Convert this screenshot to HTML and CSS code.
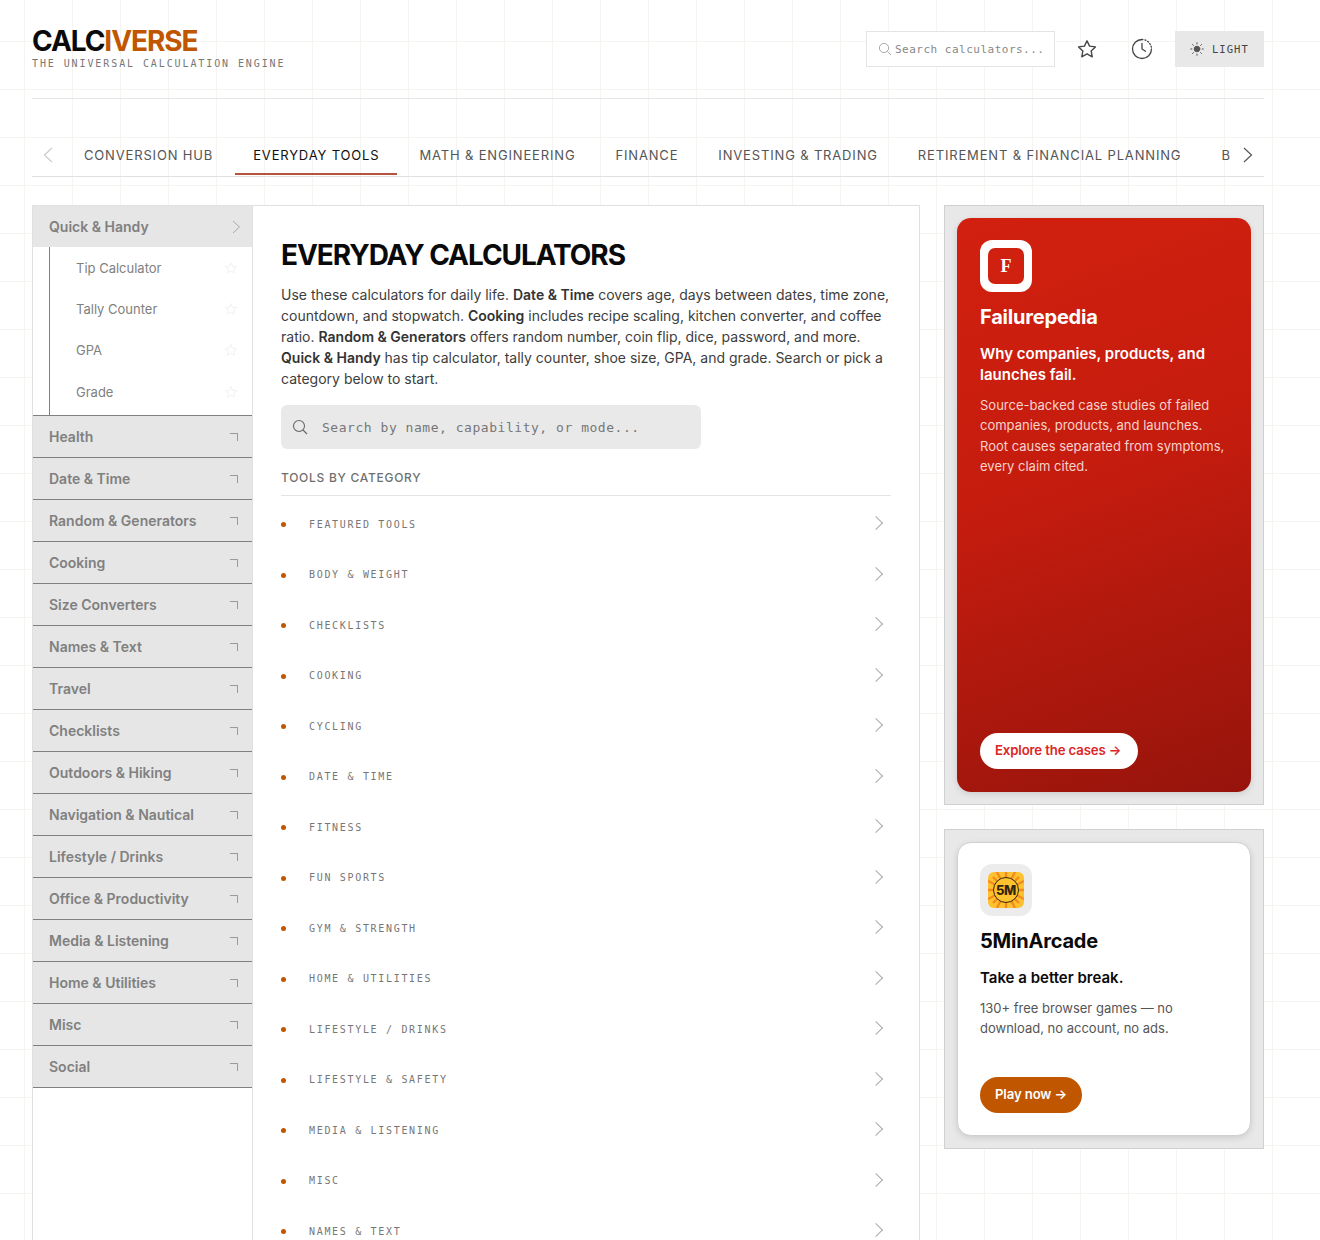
FILE: index.html
```html
<!DOCTYPE html>
<html lang="en">
<head>
    <meta charset="UTF-8">
    <meta name="viewport" content="width=device-width, initial-scale=1.0">
    <title>Calciverse</title>
    <link rel="stylesheet" href="styles.css">
</head>
<body>
    <header class="topbar">
        <div class="brand">
            <div class="logo">CALC<span>IVERSE</span></div>
            <div class="tagline">THE UNIVERSAL CALCULATION ENGINE</div>
        </div>
        <div class="tools">
            <div class="top-search">
                <svg width="14" height="14" viewBox="0 0 14 14" fill="none" stroke="#aaa" stroke-width="1"><circle cx="6" cy="6" r="4.6"/><path d="M9.4 9.4L13 13"/></svg>
                <span>Search calculators...</span>
            </div>
            <button class="icon-btn star-btn">
                <svg width="22" height="22" viewBox="0 0 24 24" fill="none" stroke="#444" stroke-width="1.5" stroke-linejoin="round"><path d="M12 3l2.8 5.9 6.4.8-4.7 4.4 1.2 6.4-5.7-3.1-5.700 3.100 1.200-6.400-4.700-4.400 6.400-.8z"/></svg>
            </button>
            <button class="icon-btn clock-btn">
                <svg width="22" height="22" viewBox="0 0 22 22" fill="none" stroke="#444" stroke-width="1.3" stroke-linecap="round"><path d="M11 1.500a9.500 9.500 0 1 0 9.500 9.500"/><path d="M11 1.500a9.500 9.500 0 0 1 9.500 9.500" stroke-dasharray="1 2"/><path d="M11 5.500V11l3.500 2.200"/></svg>
            </button>
            <button class="theme-btn">
                <svg width="14" height="14" viewBox="0 0 14 14" fill="#555" stroke="#555" stroke-width="1" stroke-linecap="round"><circle cx="7" cy="7" r="2.800"/><path d="M7 .7v1.200M7 12.100v1.200M.7 7h1.200M12.100 7h1.200M2.500 2.500l.9.9M10.600 10.600l.9.9M2.500 11.500l.9-.9M10.600 3.400l.9-.9"/></svg>
                LIGHT
            </button>
        </div>
    </header>

    <nav class="tabs">
        <span class="tab-arrow left"><svg width="12" height="18" viewBox="0 0 12 18" fill="none" stroke="#ccc" stroke-width="1.2"><path d="M10 2L2.500 9l7.500 7"/></svg></span>
        <div class="tab-list">
            <a class="tab">CONVERSION HUB</a>
            <a class="tab active">EVERYDAY TOOLS</a>
            <a class="tab">MATH &amp; ENGINEERING</a>
            <a class="tab">FINANCE</a>
            <a class="tab">INVESTING &amp; TRADING</a>
            <a class="tab">RETIREMENT &amp; FINANCIAL PLANNING</a>
            <a class="tab">B</a>
        </div>
        <span class="tab-arrow right"><svg width="12" height="18" viewBox="0 0 12 18" fill="none" stroke="#555" stroke-width="1.2"><path d="M2 2l7.500 7L2 16"/></svg></span>
    </nav>

    <div class="layout">
        <div class="panel">
            <aside class="sidebar">
                <div class="cat open">Quick &amp; Handy
                    <svg width="9" height="14" viewBox="0 0 9 14" fill="none" stroke="#aaa" stroke-width="1"><path d="M1 1l6.500 6L1 13"/></svg>
                </div>
                <div class="sub-list">
                    <div class="sub-item">Tip Calculator <svg class="fav" width="14" height="14" viewBox="0 0 24 24"><path d="M12 3l2.800 5.900 6.400.8-4.700 4.400 1.200 6.400-5.700-3.100-5.700 3.100 1.200-6.400-4.700-4.400 6.400-.8z"/></svg></div>
                    <div class="sub-item">Tally Counter <svg class="fav" width="14" height="14" viewBox="0 0 24 24"><path d="M12 3l2.800 5.900 6.400.8-4.700 4.400 1.200 6.400-5.700-3.100-5.700 3.100 1.200-6.400-4.700-4.400 6.400-.8z"/></svg></div>
                    <div class="sub-item">GPA <svg class="fav" width="14" height="14" viewBox="0 0 24 24"><path d="M12 3l2.800 5.900 6.400.8-4.700 4.400 1.200 6.400-5.700-3.100-5.700 3.100 1.200-6.400-4.700-4.400 6.400-.8z"/></svg></div>
                    <div class="sub-item">Grade <svg class="fav" width="14" height="14" viewBox="0 0 24 24"><path d="M12 3l2.800 5.900 6.400.8-4.700 4.400 1.200 6.400-5.700-3.100-5.700 3.100 1.200-6.400-4.700-4.400 6.400-.8z"/></svg></div>
                </div>
                <div class="cat first">Health <i class="corner"></i></div>
                <div class="cat">Date &amp; Time <i class="corner"></i></div>
                <div class="cat">Random &amp; Generators <i class="corner"></i></div>
                <div class="cat">Cooking <i class="corner"></i></div>
                <div class="cat">Size Converters <i class="corner"></i></div>
                <div class="cat">Names &amp; Text <i class="corner"></i></div>
                <div class="cat">Travel <i class="corner"></i></div>
                <div class="cat">Checklists <i class="corner"></i></div>
                <div class="cat">Outdoors &amp; Hiking <i class="corner"></i></div>
                <div class="cat">Navigation &amp; Nautical <i class="corner"></i></div>
                <div class="cat">Lifestyle / Drinks <i class="corner"></i></div>
                <div class="cat">Office &amp; Productivity <i class="corner"></i></div>
                <div class="cat">Media &amp; Listening <i class="corner"></i></div>
                <div class="cat">Home &amp; Utilities <i class="corner"></i></div>
                <div class="cat">Misc <i class="corner"></i></div>
                <div class="cat">Social <i class="corner"></i></div>
            </aside>

            <main class="content">
                <h1>EVERYDAY CALCULATORS</h1>
                <p class="intro">Use these calculators for daily life. <b>Date &amp; Time</b> covers age, days between dates, time zone, countdown, and stopwatch. <b>Cooking</b> includes recipe scaling, kitchen converter, and coffee ratio. <b>Random &amp; Generators</b> offers random number, coin flip, dice, password, and more. <b>Quick &amp; Handy</b> has tip calculator, tally counter, shoe size, GPA, and grade. Search or pick a category below to start.</p>
                <div class="big-search">
                    <svg width="16" height="16" viewBox="0 0 16 16" fill="none" stroke="#666" stroke-width="1.100"><circle cx="7" cy="7" r="5.500"/><path d="M11 11l4 4"/></svg>
                    <span>Search by name, capability, or mode...</span>
                </div>
                <h2>TOOLS BY CATEGORY</h2>
                <ul class="groups">
                    <li>FEATURED TOOLS</li>
                    <li>BODY &amp; WEIGHT</li>
                    <li>CHECKLISTS</li>
                    <li>COOKING</li>
                    <li>CYCLING</li>
                    <li>DATE &amp; TIME</li>
                    <li>FITNESS</li>
                    <li>FUN SPORTS</li>
                    <li>GYM &amp; STRENGTH</li>
                    <li>HOME &amp; UTILITIES</li>
                    <li>LIFESTYLE / DRINKS</li>
                    <li>LIFESTYLE &amp; SAFETY</li>
                    <li>MEDIA &amp; LISTENING</li>
                    <li>MISC</li>
                    <li>NAMES &amp; TEXT</li>
                </ul>
            </main>
        </div>

        <aside class="promos">
            <div class="promo-wrap">
                <div class="promo red">
                    <div class="app-icon white"><span class="f-mark">F</span></div>
                    <h3>Failurepedia</h3>
                    <h4>Why companies, products, and launches fail.</h4>
                    <p>Source-backed case studies of failed companies, products, and launches. Root causes separated from symptoms, every claim cited.</p>
                    <a class="pill pill-white">Explore the cases →</a>
                </div>
            </div>
            <div class="promo-wrap second">
                <div class="promo plain">
                    <div class="app-icon grey">
                        <svg class="arcade" width="36" height="36" viewBox="0 0 36 36">
                            <rect width="36" height="36" fill="#fdc22e"/>
                            <g stroke="#f58a1f" stroke-width="2.400">
                                <path d="M18 0v36M0 18h36M5 5l26 26M31 5L5 31M9 0l18 36M27 0L9 36M0 9l36 18M36 9L0 27"/>
                            </g>
                            <circle cx="18" cy="18" r="12.500" fill="#fdc22e" stroke="#33260c" stroke-width="1"/>
                            <text x="18" y="22.700" text-anchor="middle" class="five-m">5M</text>
                        </svg>
                    </div>
                    <h3>5MinArcade</h3>
                    <h4>Take a better break.</h4>
                    <p>130+ free browser games — no download, no account, no ads.</p>
                    <a class="pill pill-orange">Play now →</a>
                </div>
            </div>
        </aside>
    </div>
</body>
</html>
```
FILE: styles.css
```css
* {
    box-sizing: border-box;
}
html, body {
    margin: 0;
    height: 1240px;
    overflow: hidden;
}
body {
    padding: 0 56px 0 32px;
    font-family: Inter, "Liberation Sans", sans-serif;
    color: #111;
    background-color: #fff;
    background-image:
        linear-gradient(to right, #f5f4f1 1px, transparent 1px),
        linear-gradient(to bottom, #f5f4f1 1px, transparent 1px);
    background-size: 48px 48px;
    background-position: 24px 41px;
}

/* header */
.topbar {
    height: 99px;
    display: flex;
    justify-content: space-between;
    align-items: flex-start;
    border-bottom: 1px solid #e6e6e6;
}
.logo {
    margin-top: 25px;
    font-size: 28px;
    line-height: 32px;
    font-weight: 700;
    letter-spacing: -0.038em;
    color: #0a0a0a;
}
.logo span {
    color: #c05600;
}
.tagline {
    font-family: "DejaVu Sans Mono", "Liberation Mono", monospace;
    font-size: 10px;
    line-height: 14px;
    letter-spacing: 0.19em;
    color: #777;
}
.tools {
    margin-top: 31px;
    display: flex;
    align-items: center;
}
.top-search {
    width: 189px;
    height: 36px;
    padding-left: 11px;
    display: flex;
    align-items: center;
    gap: 3px;
    border: 1px solid #e4e4e4;
    background: #fff;
    font-family: "DejaVu Sans Mono", "Liberation Mono", monospace;
    font-size: 11px;
    letter-spacing: 0.045em;
    color: #888;
}
.icon-btn {
    width: 56px;
    height: 36px;
    padding: 0;
    display: flex;
    align-items: center;
    justify-content: center;
    border: none;
    background: none;
}
.star-btn {
    margin-left: 4px;
}
.clock-btn {
    margin-left: -1px;
}
.theme-btn {
    width: 89px;
    height: 36px;
    margin-left: 5px;
    padding: 0 0 0 15px;
    display: flex;
    align-items: center;
    gap: 8px;
    border: none;
    background: #e8e8e8;
    font-family: "DejaVu Sans Mono", "Liberation Mono", monospace;
    font-size: 10.500px;
    letter-spacing: 0.1em;
    color: #444;
}

/* tabs */
.tabs {
    position: relative;
    margin-top: 39px;
    height: 39px;
    padding-left: 34px;
    display: flex;
    overflow: hidden;
    border-bottom: 1px solid #e0e0e0;
}
.tab-list {
    display: flex;
    gap: 4px;
    overflow: hidden;
    width: 1170px;
}
.tab {
    flex: none;
    height: 37px;
    padding: 0 18px;
    font-size: 13px;
    line-height: 34px;
    font-weight: 400;
    letter-spacing: 0.0645em;
    color: #555;
}
.tab.active {
    color: #111;
    border-bottom: 2px solid #b5533c;
}
.tab-arrow {
    position: absolute;
    top: 8px;
    height: 18px;
    background: #fff;
}
.tab-arrow.left {
    left: 10px;
}
.tab-arrow.right {
    left: 1210px;
}

/* page body */
.layout {
    margin-top: 28px;
    display: flex;
    gap: 24px;
    align-items: flex-start;
}
.panel {
    width: 888px;
    min-height: 1100px;
    display: flex;
    border: 1px solid #e0e0e0;
    background: #fff;
}
.sidebar {
    width: 220px;
    flex: none;
    border-right: 1px solid #e0e0e0;
}
.cat {
    height: 42px;
    padding: 0 14px 0 16px;
    display: flex;
    justify-content: space-between;
    align-items: center;
    background: #e6e6e6;
    border-bottom: 1px solid #808080;
    font-size: 14px;
    font-weight: 600;
    color: #808080;
}
.cat.open {
    height: 41px;
    padding-right: 11px;
    border-bottom: none;
}
.cat.first {
    border-top: 1px solid #808080;
    height: 43px;
}
.corner {
    width: 8px;
    height: 8px;
    border-top: 1px solid #9a9a9a;
    border-right: 1px solid #9a9a9a;
}
.sub-list {
    margin-left: 16px;
    padding-bottom: 2.600px;
    border-left: 1px solid #808080;
}
.sub-item {
    height: 41.400px;
    padding: 0 14px 0 26px;
    display: flex;
    justify-content: space-between;
    align-items: center;
    font-size: 13px;
    color: #808080;
}
.fav {
    fill: none;
    stroke: #f4f4f4;
    stroke-width: 2;
}

/* main column */
.content {
    flex: 1;
    padding: 32px 28px 0;
}
h1 {
    margin: 0;
    font-size: 28px;
    line-height: 34px;
    font-weight: 700;
    letter-spacing: -0.038em;
    color: #0a0a0a;
}
.intro {
    margin: 12px 0 0;
    font-size: 14px;
    line-height: 21px;
    color: #3d3d3d;
}
.intro b {
    font-weight: 600;
    color: #333;
}
.big-search {
    width: 420px;
    height: 44px;
    margin-top: 16px;
    padding-left: 11px;
    display: flex;
    align-items: center;
    gap: 14px;
    border-radius: 6px;
    background: #e9e9e9;
    font-family: "DejaVu Sans Mono", "Liberation Mono", monospace;
    font-size: 13px;
    letter-spacing: 0.041em;
    color: #777;
}
h2 {
    margin: 21px 0 0;
    padding-bottom: 10px;
    border-bottom: 1px solid #e4e4e4;
    font-size: 12px;
    line-height: 15px;
    font-weight: 500;
    letter-spacing: 0.06em;
    color: #6f6f6f;
}
.groups {
    margin: 3.500px 0 0;
    padding: 0;
    list-style: none;
}
.groups li {
    position: relative;
    height: 50.500px;
    padding-left: 28px;
    font-family: "DejaVu Sans Mono", "Liberation Mono", monospace;
    font-size: 10px;
    line-height: 50.500px;
    letter-spacing: 0.168em;
    color: #777;
}
.groups li::before {
    content: "";
    position: absolute;
    left: 0;
    top: 22.500px;
    width: 5px;
    height: 5px;
    border-radius: 50%;
    background: #c05600;
}
.groups li::after {
    content: "";
    position: absolute;
    right: 10px;
    top: 18.500px;
    width: 9px;
    height: 9px;
    border-top: 1px solid #aaa;
    border-right: 1px solid #aaa;
    transform: rotate(45deg);
}

/* promo cards */
.promos {
    width: 320px;
    flex: none;
}
.promo-wrap {
    padding: 12px;
    height: 600px;
    border: 1px solid #d0d0d0;
    background: #e8e8e8;
}
.promo-wrap.second {
    height: 320px;
    margin-top: 24px;
}
.promo {
    height: 100%;
    padding: 22px;
    display: flex;
    flex-direction: column;
    align-items: flex-start;
    border-radius: 14px;
    box-shadow: 0 2px 6px rgba(0, 0, 0, 0.12);
}
.promo.red {
    padding: 22px 23px 23px;
    color: #fff;
    background: linear-gradient(160deg, #d2200f 0%, #c41c0e 45%, #96140c 100%);
}
.promo.plain {
    border: 1px solid #d0d0d0;
    background: #fff;
    color: #0a0a0a;
}
.app-icon {
    width: 52px;
    height: 52px;
    flex: none;
    display: flex;
    align-items: center;
    justify-content: center;
    border-radius: 12px;
}
.app-icon.white {
    background: #fff;
}
.app-icon.grey {
    background: #ececec;
}
.promo.plain .app-icon {
    margin-top: -1px;
}
.arcade {
    border-radius: 6px;
}
.f-mark {
    width: 36px;
    height: 36px;
    border-radius: 7px;
    background: #d0200f;
    color: #fff;
    font-family: "Liberation Serif", serif;
    font-size: 18px;
    font-weight: 700;
    line-height: 36px;
    text-align: center;
}
.five-m {
    font-family: Inter, sans-serif;
    font-size: 13px;
    font-weight: 800;
    letter-spacing: -0.02em;
    fill: #33260c;
}
.promo h3 {
    margin: 13px 0 0;
    font-size: 20px;
    line-height: 24px;
    font-weight: 700;
    letter-spacing: -0.01em;
}
.promo h4 {
    margin: 14px 0 0;
    font-size: 15px;
    line-height: 21px;
    font-weight: 600;
}
.promo p {
    margin: 9.700px 0 0;
    font-size: 13px;
    line-height: 20.500px;
}
.promo.red p {
    color: #f6d2cd;
}
.promo.plain p {
    color: #555;
}
.pill {
    margin-top: auto;
    height: 36px;
    padding: 0 15px;
    border-radius: 18px;
    font-size: 13.200px;
    line-height: 35px;
    font-weight: 600;
    letter-spacing: -0.01em;
}
.pill-white {
    padding-right: 17px;
    background: #fff;
    color: #dc2626;
}
.pill-orange {
    background: #c05600;
    color: #fff;
}
```
